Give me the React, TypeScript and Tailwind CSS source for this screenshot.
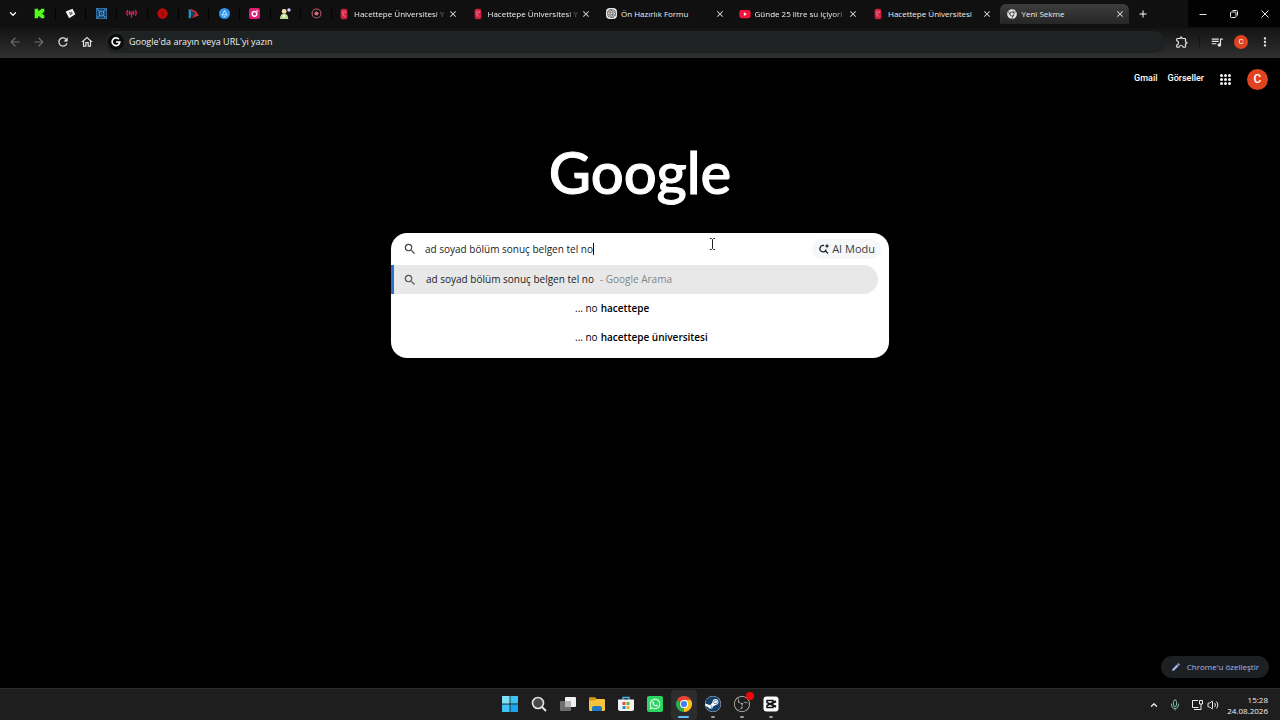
import React, { useState } from 'react';
import {
  MdAdd,
  MdArrowBack,
  MdArrowForward,
  MdClose,
  MdEdit,
  MdMoreVert,
  MdOutlineExtension,
  MdOutlineHome,
  MdQueueMusic,
  MdRefresh,
  MdSearch,
} from 'react-icons/md';
import { FaChrome, FaSteam, FaWhatsapp } from 'react-icons/fa';
import { SiObsstudio, SiOpenai } from 'react-icons/si';
import { ChevronDown, ChevronUp, Mic, Volume2 } from 'lucide-react';

interface Tab {
  title: string;
  icon: React.ReactNode;
  active?: boolean;
  faded?: boolean;
}

const CrestIcon = () => (
  <svg viewBox="0 0 16 16" className="h-3 w-3">
    <rect x="3.500" y="1" width="9" height="14" rx="3" fill="#d3203f" />
    <path d="M6.500 4v5l3 2.500M9.500 4v3" stroke="#f7a6b4" strokeWidth="1" fill="none" />
  </svg>
);

const YoutubeIcon = () => (
  <svg viewBox="0 0 16 16" className="h-3 w-3">
    <rect x="0.500" y="2.500" width="15" height="11" rx="3" fill="#f5123d" />
    <path d="M6.500 5.500v5l4-2.500z" fill="#fff" />
  </svg>
);

const pinned: { name: string; icon: React.ReactNode }[] = [
  {
    name: 'Kick',
    icon: <path d="M1 1h5v3h2V2.500h2V1h5v5h-2v1.500h-2v1h2V10h2v5h-5v-1.500H8V12H6v3H1z" fill="#53fc18" />,
  },
  {
    name: 'Panel',
    icon: (
      <>
        <path d="M1 5l10-4 4 8-9 6z" fill="#f1f1f4" />
        <path d="M6 6.500l4-1 1 3-3.500 2z" fill="#3b3b45" />
        <path d="M7 8l3-1" stroke="#fff" strokeWidth="1" />
      </>
    ),
  },
  {
    name: 'Ayarlar',
    icon: (
      <>
        <rect x="0.500" y="0.500" width="15" height="15" fill="#123a5a" stroke="#3f8fd0" strokeWidth="1" />
        <circle cx="8" cy="8" r="3.500" fill="none" stroke="#4ea3e6" strokeWidth="1.500" />
        <path d="M2 2l3 3M14 2l-3 3M2 14l3-3M14 14l-3-3" stroke="#4ea3e6" strokeWidth="1.500" />
        <circle cx="8" cy="8" r="1" fill="#4ea3e6" />
      </>
    ),
  },
  {
    name: 'Yayın',
    icon: (
      <g stroke="#cf2264" strokeWidth="2" fill="none">
        <path d="M2.500 3c-2 3-2 5 0 8M13.500 3c2 3 2 5 0 8M5.500 4c-1 2-1 4 0 6M10.500 4c1 2 1 4 0 6M8 7v7" />
        <circle cx="8" cy="7" r="1" fill="#cf2264" />
      </g>
    ),
  },
  {
    name: 'Kayıt',
    icon: (
      <>
        <path d="M8 0l5 2 3 6-3 6-5 2-5-2-3-6 3-6z" fill="#bd0a0a" />
        <path d="M8 3v10M4 6l8 4" stroke="#8a0505" strokeWidth="1" />
      </>
    ),
  },
  {
    name: 'Oynatıcı',
    icon: (
      <>
        <path d="M1 1l4 3v5l-1 6H1z" fill="#2a93bf" />
        <path d="M5 2l8 5-3 4-5 2z" fill="#12405c" />
        <path d="M12 6l4 5-11 4 4-4z" fill="#e02a34" />
        <path d="M4 2l9 5" stroke="#e02a34" strokeWidth="2" />
      </>
    ),
  },
  {
    name: 'Mağaza',
    icon: (
      <>
        <circle cx="8" cy="8" r="8" fill="#2f95ee" />
        <path d="M8 3.500l3 6M8 3.500l-3 6M3.500 10h9M6.500 12.500h3" stroke="#dff0ff" strokeWidth="1.300" fill="none" />
      </>
    ),
  },
  {
    name: 'Müzik',
    icon: (
      <>
        <rect width="16" height="16" rx="3" fill="#e01e73" />
        <circle cx="8" cy="8.500" r="3.500" fill="none" stroke="#fff" strokeWidth="2" />
        <circle cx="12" cy="4" r="1.200" fill="#fff" />
      </>
    ),
  },
  {
    name: 'Sohbet',
    icon: (
      <>
        <circle cx="6" cy="5" r="3.500" fill="#f4e3a8" />
        <path d="M0 16c0-5 2-8 6-8s6 3 6 8z" fill="#b9dd8c" />
        <circle cx="13" cy="3" r="2.500" fill="#cfd8ff" />
        <circle cx="6" cy="11.500" r="1.800" fill="#fff" />
      </>
    ),
  },
  {
    name: 'Canlı',
    icon: (
      <>
        <circle cx="8" cy="8" r="6.500" fill="none" stroke="#b9586b" strokeWidth="1.500" />
        <circle cx="8" cy="8" r="3" fill="#d8687d" />
      </>
    ),
  },
];

const tabs: Tab[] = [
  { title: 'Hacettepe Üniversitesi Y', icon: <CrestIcon />, faded: true },
  { title: 'Hacettepe Üniversitesi Y', icon: <CrestIcon />, faded: true },
  {
    title: 'Ön Hazırlık Formu',
    icon: (
      <span className="flex h-[11px] w-[11px] items-center justify-center rounded-sm bg-[#e8e8e8] text-[#333]">
        <SiOpenai className="h-[9px] w-[9px]" />
      </span>
    ),
  },
  { title: 'Günde 25 litre su içiyorl', icon: <YoutubeIcon />, faded: true },
  { title: 'Hacettepe Üniversitesi', icon: <CrestIcon /> },
  { title: 'Yeni Sekme', icon: <FaChrome className="h-[10px] w-[10px] text-[#e3e3e3]" />, active: true },
];

const TabStrip = () => (
  <div className="flex h-7 items-center bg-[#101010] pb-px">
    <button aria-label="Sekmelerde ara" className="flex w-[25px] justify-center text-white">
      <ChevronDown className="h-2.5 w-2.5" strokeWidth={3} />
    </button>
    <div className="grid w-[307px] shrink-0 grid-cols-10">
      {pinned.map((tab) => (
        <button
          key={tab.name}
          aria-label={tab.name}
          className="flex h-3 items-center justify-center border-r border-[#030303]"
        >
          <svg viewBox="0 0 16 16" className="h-[11px] w-[11px]">
            {tab.icon}
          </svg>
        </button>
      ))}
    </div>
    <div className="grid min-w-0 flex-1 grid-cols-6">
      {tabs.map((tab, i) => (
        <div
          key={i}
          className={
            tab.active
              ? 'mr-1 flex h-5 items-center rounded-t-md bg-linear-to-b from-[#3d3d3d] to-[#262626] pr-1 pl-1.5'
              : 'flex h-5 items-center pr-2 pl-1.5'
          }
        >
          <span className="mr-1 flex w-3 shrink-0 justify-center">{tab.icon}</span>
          <button
            className={
              tab.faded
                ? 'min-w-0 flex-1 mask-r-from-85% text-left text-[8px] whitespace-nowrap text-[#f0f0f0]'
                : 'min-w-0 flex-1 text-left text-[8px] whitespace-nowrap text-[#f0f0f0]'
            }
          >
            {tab.title}
          </button>
          <button aria-label="Sekmeyi kapat" className="shrink-0 text-[#e6e6e6]">
            <MdClose className="h-2.5 w-2.5" />
          </button>
        </div>
      ))}
    </div>
    <button aria-label="Yeni sekme" className="mr-[35px] flex w-5 justify-center text-white">
      <MdAdd className="h-3 w-3" />
    </button>
    <div className="grid h-full w-[92px] grid-cols-3 bg-[#020202] text-[#e6e6e6]">
      <button aria-label="Simge durumuna küçült" className="flex items-center justify-center">
        <svg viewBox="0 0 8 8" className="h-2 w-2" stroke="currentColor">
          <path d="M0.500 4.500h7" />
        </svg>
      </button>
      <button aria-label="Önceki boyut" className="flex items-center justify-center">
        <svg viewBox="0 0 8 8" className="h-2 w-2" fill="none" stroke="currentColor">
          <rect x="0.500" y="2" width="5.500" height="5.500" rx="1" />
          <path d="M2.500 0.500h4a1 1 0 0 1 1 1v4" />
        </svg>
      </button>
      <button aria-label="Kapat" className="flex items-center justify-center">
        <svg viewBox="0 0 8 8" className="h-2 w-2" stroke="currentColor">
          <path d="M0.500 0.500l7 7M7.500 0.500l-7 7" />
        </svg>
      </button>
    </div>
  </div>
);

const Toolbar = () => (
  <div className="flex h-[30px] items-center bg-linear-to-b from-[#141414] to-[#303030] pr-2 pb-0.5 text-[#e3e3e3]">
    <div className="flex w-[105px] shrink-0 items-center gap-2.5 pl-2">
      <button aria-label="Geri" className="text-[#6e6e6e]">
        <MdArrowBack className="h-3.5 w-3.5" />
      </button>
      <button aria-label="İleri" className="text-[#6e6e6e]">
        <MdArrowForward className="h-3.5 w-3.5" />
      </button>
      <button aria-label="Yenile">
        <MdRefresh className="h-3.5 w-3.5" />
      </button>
      <button aria-label="Ana sayfa">
        <MdOutlineHome className="h-3.5 w-3.5" />
      </button>
    </div>
    <div className="flex h-[22px] flex-1 items-center gap-[5px] rounded-full bg-[#1f2223] pl-[3px]">
      <span className="flex h-4 w-4 items-center justify-center rounded-full bg-[#0b0b0b]">
        <svg viewBox="0 0 12 12" className="h-2.5 w-2.5" fill="none" stroke="#fff" strokeWidth="2">
          <path d="M9.500 2.700A4.600 4.600 0 1 0 10.600 6H6" />
        </svg>
      </span>
      <input
        aria-label="Adres ve arama çubuğu"
        placeholder="Google'da arayın veya URL'yi yazın"
        className="min-w-0 flex-1 bg-transparent text-[9px] outline-none placeholder:text-[#f0f0f0]"
      />
    </div>
    <button aria-label="Uzantılar" className="ml-2.5">
      <MdOutlineExtension className="h-3.5 w-3.5" />
    </button>
    <span className="ml-2.5 h-2.5 w-px bg-[#111]" />
    <button aria-label="Medya denetimi" className="ml-2.5">
      <MdQueueMusic className="h-3.5 w-3.5" />
    </button>
    <button
      aria-label="Profil"
      className="ml-2.5 flex h-[14px] w-[14px] items-center justify-center rounded-full bg-[#e0431f] font-['Roboto',sans-serif] text-[8px] text-white"
    >
      C
    </button>
    <button aria-label="Menü" className="ml-2.5">
      <MdMoreVert className="h-3.5 w-3.5" />
    </button>
  </div>
);

const SearchBox = () => {
  const [query, setQuery] = useState('ad soyad bölüm sonuç belgen tel no');

  return (
    <div className="relative mx-auto mt-[30px] w-[498px] overflow-hidden rounded-2xl bg-white pb-1.5 text-[10px] text-[#202124]">
      <div className="flex h-8 items-center pr-2 pl-3">
        <MdSearch className="h-3.5 w-3.5 text-[#444]" />
        <div className="flex min-w-0 flex-1 items-center pl-2">
          <input
            aria-label="Ara"
            value={query}
            onChange={(e) => setQuery(e.target.value)}
            className="field-sizing-content bg-transparent outline-none"
          />
          <span className="h-3 w-px bg-black" />
        </div>
        <button className="flex h-5 items-center gap-0.5 rounded-full bg-[#f5f7f8] px-1.5 text-[11px] text-[#3a3d40]">
          <svg viewBox="0 0 12 12" className="h-3 w-3" fill="none" stroke="#1f1f1f" strokeWidth="1.300">
            <path d="M6 2.500A3.200 3.200 0 1 0 8.200 6.500M7.400 7.900l2.600 2.600" />
            <path d="M9 0.500l.7 1.800 1.800.7-1.800.7L9 5.500l-.7-1.800L6.500 3l1.800-.7z" fill="#1f1f1f" stroke="none" />
          </svg>
          AI Modu
        </button>
      </div>
      <ul>
        <li className="mr-[11px] flex h-[29px] items-center rounded-r-full border-l-[3px] border-[#2f6fd0] bg-[#e8e8e8] pl-[9px]">
          <MdSearch className="h-3.5 w-3.5 text-[#555]" />
          <span className="pl-[9px]">ad soyad bölüm sonuç belgen tel no</span>
          <span className="pl-1.5 text-[#80868b]">- Google Arama</span>
        </li>
        <li className="flex h-[29px] items-center gap-[3px] pl-[184px] text-black">
          <span>... no</span>
          <b className="font-semibold">hacettepe</b>
        </li>
        <li className="flex h-[29px] items-center gap-[3px] pl-[184px] text-black">
          <span>... no</span>
          <b className="font-semibold">hacettepe üniversitesi</b>
        </li>
      </ul>
      {/* text cursor hovering over the field */}
      <svg viewBox="0 0 7 12" className="absolute top-[5px] left-[318px] h-3 w-[7px]" fill="none" stroke="#222">
        <path d="M1 .5h1.500l1 1 1-1H6M3.500 1.500v9M1 11.500h1.500l1-1 1 1H6" />
      </svg>
    </div>
  );
};

const taskbarApps = [
  {
    name: 'Başlat',
    icon: (
      <svg viewBox="0 0 16 16" className="h-4 w-4" fill="#3fc3f2">
        <path d="M0 0h7.600v7.600H0z" fill="#7fe0fa" />
        <path d="M8.400 0H16v7.600H8.400zM0 8.400h7.600V16H0z" />
        <path d="M8.400 8.400H16V16H8.400z" fill="#1aa4ea" />
      </svg>
    ),
  },
  {
    name: 'Ara',
    icon: (
      <svg viewBox="0 0 16 16" className="h-4 w-4" fill="none" stroke="#e4e4e4" strokeWidth="1.600">
        <circle cx="7" cy="7" r="5.500" fill="#4a4a4a" />
        <path d="M11 11l4 4" strokeWidth="2" />
      </svg>
    ),
  },
  {
    name: 'Görev görünümü',
    icon: (
      <svg viewBox="0 0 16 16" className="h-4 w-4">
        <rect x="5" y="1" width="11" height="10" rx="1" fill="#f0f0f0" />
        <rect x="0" y="5" width="11" height="10" rx="1" fill="#777" fillOpacity=".9" />
        <path d="M5 5h6v6H5z" fill="#b5b5b5" />
      </svg>
    ),
  },
  {
    name: 'Dosya Gezgini',
    icon: (
      <svg viewBox="0 0 16 16" className="h-4 w-4">
        <path d="M0 2.500q0-1 1-1h5l1.500 1.500H15q1 0 1 1v10q0 1-1 1H1q-1 0-1-1z" fill="#f6c33b" />
        <path d="M0 2.500q0-1 1-1h5l1 1.500-1 1.500H0z" fill="#d99516" />
        <path d="M3 15v-3q0-2 2-2h6q2 0 2 2v3z" fill="#1f78c1" />
      </svg>
    ),
  },
  {
    name: 'Microsoft Store',
    icon: (
      <svg viewBox="0 0 16 16" className="h-4 w-4">
        <path d="M5 4V1.500h6V4" fill="none" stroke="#4fb9ee" strokeWidth="1.300" />
        <path d="M0 3.500h16V13q0 2-2 2H2q-2 0-2-2z" fill="#f1f3f5" />
        <path d="M4.500 6h3v3h-3z" fill="#e8502c" />
        <path d="M8.500 6h3v3h-3z" fill="#6bb42e" />
        <path d="M4.500 10h3v3h-3z" fill="#1f8fe0" />
        <path d="M8.500 10h3v3h-3z" fill="#f2b21b" />
      </svg>
    ),
  },
  {
    name: 'WhatsApp',
    icon: (
      <span className="flex h-4 w-4 items-center justify-center rounded-xs bg-[#2bd662] text-white">
        <FaWhatsapp className="h-3 w-3" />
      </span>
    ),
  },
  {
    name: 'Google Chrome',
    icon: (
      <svg viewBox="0 0 16 16" className="h-4 w-4">
        <path d="M8 8L1.070 4A8 8 0 0 1 14.930 4z" fill="#e94335" />
        <path d="M8 8l6.930-4A8 8 0 0 1 8 16z" fill="#fbc116" />
        <path d="M8 8v8A8 8 0 0 1 1.070 4z" fill="#2da94f" />
        <path d="M8 4h6.930L11.500 10 8 16l3.500-6z" fill="#fbc116" />
        <circle cx="8" cy="8" r="4" fill="#fff" />
        <circle cx="8" cy="8" r="3.100" fill="#3f82ee" />
      </svg>
    ),
    active: true,
  },
  {
    name: 'Steam',
    icon: (
      <span className="flex h-4 w-4 rounded-full bg-white text-[#14406e]">
        <FaSteam className="h-4 w-4" />
      </span>
    ),
    open: true,
  },
  {
    name: 'OBS Studio',
    icon: (
      <span className="relative text-[#c9c9c9]">
        <SiObsstudio className="h-4 w-4" />
        <span className="absolute -top-1 -right-1 h-2 w-2 rounded-full bg-[#f00808]" />
      </span>
    ),
    open: true,
  },
  {
    name: 'CapCut',
    icon: (
      <svg viewBox="0 0 16 16" className="h-4 w-4" fill="none" stroke="#111" strokeWidth="1.500">
        <rect x="0.500" y="0.500" width="15" height="15" rx="3" fill="#fff" stroke="none" />
        <path d="M13 5.500L10 7V4.500H4v2l9 4.500M13 10.500L10 9v2.500H4v-2L13 5" />
      </svg>
    ),
    open: true,
  },
];

const Taskbar = () => (
  <footer className="grid h-8 grid-cols-[1fr_auto_1fr] items-center border-t border-[#2b2b2b] bg-[#1e1e1e]">
    <span />
    <nav className="flex gap-[3px]">
      {taskbarApps.map((app) => (
        <button
          key={app.name}
          aria-label={app.name}
          className={
            app.active
              ? 'flex h-[30px] w-[26px] flex-col items-center justify-end gap-1 rounded-sm bg-[#2d2d2d] pb-0.5'
              : 'flex h-[30px] w-[26px] flex-col items-center justify-end gap-1 pb-0.5'
          }
        >
          {app.icon}
          {app.active ? (
            <span className="h-0.5 w-[11px] rounded-full bg-[#5fc0f5]" />
          ) : (
            <span className={app.open ? 'h-0.5 w-1 rounded-full bg-[#9a9a9a]' : 'h-0.5 w-1'} />
          )}
        </button>
      ))}
    </nav>
    <div className="flex items-center justify-end pr-3 text-[#eee]">
      <button aria-label="Gizli simgeleri göster">
        <ChevronUp className="h-2.5 w-2.5" strokeWidth={3} />
      </button>
      <Mic className="ml-2.5 h-3 w-3 text-[#7fb8a4]" />
      <svg viewBox="0 0 12 12" className="ml-2.5 h-3 w-3" fill="none" stroke="currentColor">
        <path d="M7 1.500H1.500v7h6M3 10.500h5M8.500 1.500h3v3.500h-3zM10 5v5.500H8" />
      </svg>
      <Volume2 className="ml-1 h-3 w-3" />
      <div className="ml-2 text-right text-[8px] leading-[11px]">
        <div>15:28</div>
        <div>24.08.2026</div>
      </div>
    </div>
  </footer>
);

export default function App() {
  return (
    <div className="flex min-h-screen flex-col bg-black font-['Open_Sans','Noto_Sans',sans-serif]">
      <header>
        <TabStrip />
        <Toolbar />
      </header>
      <main className="flex flex-1 flex-col">
        <div className="flex h-[42px] items-center justify-end gap-2.5 pr-3 font-['Roboto',sans-serif] text-[9px] font-medium text-white">
          <a href="#gmail">Gmail</a>
          <a href="#gorseller">Görseller</a>
          <button aria-label="Google uygulamaları" className="ml-1.5">
            <svg viewBox="0 0 11 11" className="h-[11px] w-[11px]" fill="#f4f4f4">
              {[0, 4, 8].map((y) =>
                [0, 4, 8].map((x) => <rect key={`${x}-${y}`} x={x} y={y} width="3" height="3" rx="1.500" />)
              )}
            </svg>
          </button>
          <button
            aria-label="Google Hesabı"
            className="ml-1.5 flex h-[21px] w-[21px] items-center justify-center rounded-full bg-[#e0431f] text-xs"
          >
            C
          </button>
        </div>
        <h1 className="mt-10 text-center font-['Lato',sans-serif] text-[58px] leading-[63px] font-medium text-white [-webkit-text-stroke:1px_white]">
          Google
        </h1>
        <SearchBox />
        <div className="mt-auto flex justify-end pr-[11px] pb-2.5">
          <button className="flex h-[22px] items-center gap-1.5 rounded-full bg-[#1d2022] px-2.5 text-[8px] text-[#a3b8f0]">
            <MdEdit className="h-2.5 w-2.5" />
            Chrome'u özelleştir
          </button>
        </div>
      </main>
      <Taskbar />
    </div>
  );
}
